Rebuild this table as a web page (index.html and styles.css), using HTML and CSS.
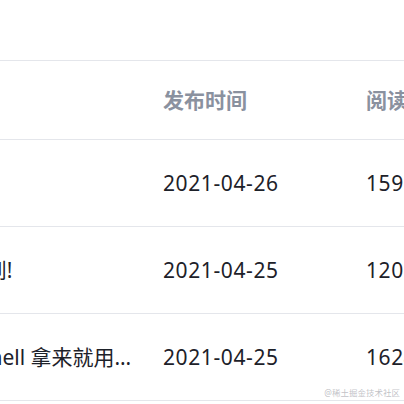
FILE: index.html
```html
<!DOCTYPE html>
<html lang="zh-CN">
<head>
<meta charset="utf-8">
<link rel="stylesheet" href="styles.css">
</head>
<body>
<div class="page">
  <table class="list">
    <colgroup>
      <col class="c-title">
      <col class="c-date">
      <col class="c-read">
    </colgroup>
    <thead>
      <tr>
        <th>文章标题</th>
        <th>发布时间</th>
        <th>阅读量</th>
      </tr>
    </thead>
    <tbody>
      <tr>
        <td><div class="ellipsis">前端工程化</div></td>
        <td class="num">2021-04-26</td>
        <td class="num">1590</td>
      </tr>
      <tr>
        <td><div class="ellipsis">Vue3 的终于等到!</div></td>
        <td class="num">2021-04-25</td>
        <td class="num">1203</td>
      </tr>
      <tr>
        <td><div class="ellipsis">100 个实用的 Shell 拿来就用的脚本合集</div></td>
        <td class="num">2021-04-25</td>
        <td class="num">1624</td>
      </tr>
    </tbody>
  </table>
  <div class="watermark">@稀土掘金技术社区</div>
</div>
</body>
</html>
```

FILE: styles.css
```css
html, body {
  margin: 0;
  padding: 0;
  background: #fff;
  overflow: hidden;
  width: 404px;
  height: 404px;
}

.page {
  position: relative;
  width: 404px;
  height: 404px;
  padding-top: 60px;
  box-sizing: border-box;
  font-family: "Noto Sans", "Noto Sans CJK SC", sans-serif;
  font-size: 21px;
  color: #1d2129;
}

.list {
  margin-left: -153px;
  border-collapse: collapse;
  table-layout: fixed;
  width: 620px;
}

.c-title { width: 316px; }
.c-date { width: 203px; }
.c-read { width: 101px; }

.list th,
.list td {
  text-align: left;
  padding: 0 16px 0 0;
  border-top: 1px solid #e4e6eb;
  border-bottom: 1px solid #e4e6eb;
  line-height: 28px;
  white-space: nowrap;
  overflow: hidden;
}

.list th {
  height: 78px;
  font-weight: 700;
  color: #8a919f;
}

.list td {
  height: 86px;
}

.list td.num {
  letter-spacing: 0.6px;
}

.ellipsis {
  overflow: hidden;
  text-overflow: ellipsis;
  white-space: nowrap;
}

.watermark {
  position: absolute;
  right: 4px;
  bottom: 6px;
  font-size: 8.5px;
  line-height: 10px;
  color: rgba(140, 140, 150, 0.55);
  white-space: nowrap;
}
```
